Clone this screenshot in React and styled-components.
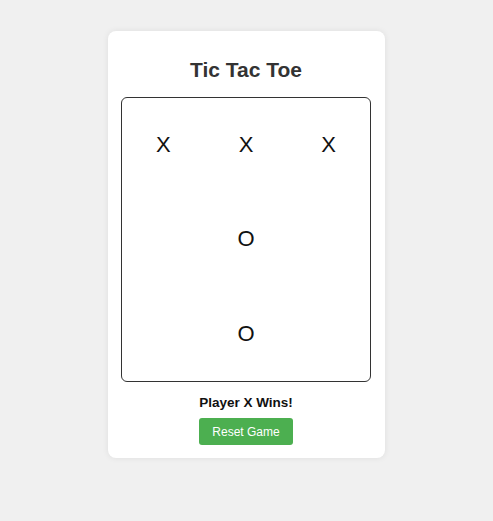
import React from "react";
import styled, { createGlobalStyle } from "styled-components";

const Global = createGlobalStyle`
  html, body { margin: 0; padding: 0; background: #f0f0f0; }
  body { font-family: "Liberation Sans", Arial, sans-serif; }
`;

const Page = styled.div`
  display: flex;
  justify-content: center;
  align-items: flex-start;
  padding-top: 31px;
  min-height: 521px;
  box-sizing: border-box;
`;

const Card = styled.div`
  width: 277px;
  box-sizing: border-box;
  background: #fff;
  border-radius: 8px;
  box-shadow: 0 0 6px rgba(0, 0, 0, 0.08);
  padding: 27px 14px 13px 13px;
  display: flex;
  flex-direction: column;
  align-items: center;
`;

const Title = styled.h1`
  margin: 0 0 15px;
  font-size: 21px;
  line-height: 24px;
  font-weight: bold;
  color: #333;
`;

const Board = styled.div`
  width: 250px;
  height: 285px;
  box-sizing: border-box;
  border: 1px solid #333;
  border-radius: 6px;
  display: grid;
  grid-template-columns: repeat(3, 1fr);
  grid-template-rows: repeat(3, 1fr);
`;

const Cell = styled.div`
  display: flex;
  align-items: center;
  justify-content: center;
  font-size: 22px;
  color: #111;
`;

const Status = styled.div`
  margin-top: 13px;
  font-size: 13.5px;
  line-height: 16px;
  font-weight: bold;
  color: #111;
`;

const Button = styled.button`
  margin-top: 7px;
  width: 94px;
  height: 27px;
  border: none;
  border-radius: 3px;
  background: #4caf50;
  color: #fff;
  font-family: "Liberation Sans", Arial, sans-serif;
  font-size: 12px;
  padding: 0;
  cursor: pointer;
`;

const cells = ["X", "X", "X", "", "O", "", "", "O", ""];

export default function App() {
  return (
    <>
      <Global />
      <Page>
        <Card>
          <Title>Tic Tac Toe</Title>
          <Board>
            {cells.map((c, i) => (
              <Cell key={i}>{c}</Cell>
            ))}
          </Board>
          <Status>Player X Wins!</Status>
          <Button>Reset Game</Button>
        </Card>
      </Page>
    </>
  );
}
